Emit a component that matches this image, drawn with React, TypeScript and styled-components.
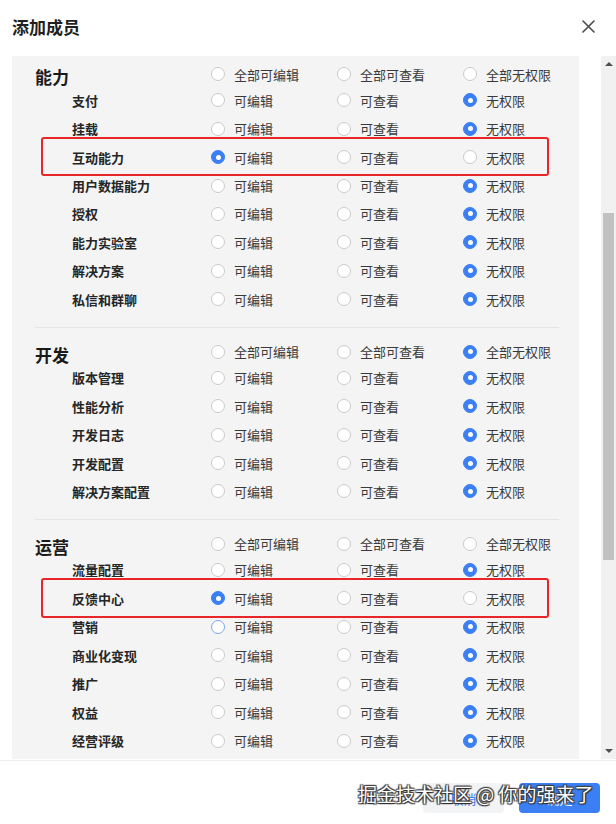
import React from 'react'
import styled, { createGlobalStyle } from 'styled-components'

const GlobalStyle = createGlobalStyle`
  html, body {
    margin: 0;
    padding: 0;
    background: #ffffff;
    overflow: hidden;
  }
  * {
    box-sizing: border-box;
  }
`

const FONT = `"Microsoft YaHei", "Noto Sans CJK SC", "Noto Sans", sans-serif`

const Dialog = styled.div`
  position: relative;
  width: 616px;
  height: 824px;
  background: #ffffff;
  font-family: ${FONT};
  color: #333333;
  overflow: hidden;
`

const Header = styled.div`
  height: 56px;
  display: flex;
  align-items: center;
  justify-content: space-between;
  padding: 0 20px 3px 12px;
`

const Title = styled.h1`
  margin: 0;
  font-size: 17px;
  font-weight: 700;
  color: #1f1f1f;
`

const CloseButton = styled.button`
  width: 16px;
  height: 16px;
  padding: 0;
  border: none;
  background: transparent;
  display: flex;
  align-items: center;
  justify-content: center;
  cursor: pointer;
`

const Body = styled.div`
  height: 704px;
  display: flex;
  padding-left: 12px;
`

const Panel = styled.div`
  width: 573px;
  height: 703px;
  background: #f4f4f4;
  overflow: hidden;
`

const Scrollbar = styled.div`
  margin-left: 22px;
  width: 15px;
  height: 703px;
  background: #f1f1f1;
  display: flex;
  flex-direction: column;
  flex-shrink: 0;
`

const Arrow = styled.div<{ $down?: boolean }>`
  height: 16px;
  display: flex;
  align-items: center;
  justify-content: center;
  &::before {
    content: '';
    border-left: 4px solid transparent;
    border-right: 4px solid transparent;
    ${(p) => (p.$down ? 'border-top: 4px solid #505050;' : 'border-bottom: 4px solid #505050;')}
  }
`

const Track = styled.div`
  flex: 1;
  display: flex;
  flex-direction: column;
  padding-top: 141px;
`

const Thumb = styled.div`
  height: 347px;
  margin: 0 2px;
  background: #c1c1c1;
`

const Section = styled.div`
  margin: 0 20px 0 23px;
  padding: 12px 0 13px;
  border-bottom: 1px solid #e4e4e4;
  &:first-child {
    padding-top: 6px;
  }
  &:last-child {
    border-bottom: none;
  }
`

const Row = styled.div<{ $head?: boolean; $marked?: boolean }>`
  position: relative;
  display: grid;
  grid-template-columns: 176px 126px 126px 126px;
  grid-template-rows: 100%;
  align-items: center;
  height: ${(p) => (p.$head ? '24px' : '28.45px')};
  ${(p) =>
    p.$marked &&
    `
    &::after {
      content: '';
      position: absolute;
      left: 6px;
      right: 10px;
      top: -6px;
      bottom: -5px;
      border: 2px solid #e8262a;
      border-radius: 3px;
      pointer-events: none;
    }
  `}
`

const CategoryTitle = styled.div`
  font-size: 17px;
  line-height: 17px;
  font-weight: 700;
  color: #1a1a1a;
  margin-top: 5px;
`

const ItemLabel = styled.div`
  padding-left: 37px;
  font-size: 13px;
  font-weight: 700;
  color: #262626;
  white-space: nowrap;
`

const Option = styled.label`
  display: flex;
  align-items: center;
  gap: 9px;
  font-size: 13px;
  color: #3a3a3a;
  white-space: nowrap;
  cursor: pointer;
`

const RadioDot = styled.span<{ $checked?: boolean; $hover?: boolean }>`
  position: relative;
  width: 14px;
  height: 14px;
  border-radius: 50%;
  flex-shrink: 0;
  border: 1px solid ${(p) => (p.$checked ? '#3b7ff5' : p.$hover ? '#7aa7ef' : '#cacaca')};
  background: ${(p) => (p.$checked ? '#3b7ff5' : '#ffffff')};
  &::after {
    content: '';
    display: ${(p) => (p.$checked ? 'block' : 'none')};
    position: absolute;
    left: 3.5px;
    top: 3.5px;
    width: 5px;
    height: 5px;
    border-radius: 50%;
    background: #ffffff;
  }
`

const Footer = styled.div`
  height: 64px;
  border-top: 1px solid #ececec;
  display: flex;
  justify-content: flex-end;
  align-items: flex-start;
  gap: 15px;
  padding: 22px 16px 0 0;
`

const Button = styled.button<{ $primary?: boolean }>`
  width: 81px;
  height: 30px;
  border: none;
  border-radius: 4px;
  font-family: ${FONT};
  font-size: 13px;
  background: ${(p) => (p.$primary ? '#3b7ff5' : '#f2f3f5')};
  color: ${(p) => (p.$primary ? '#ffffff' : '#3b7ff5')};
  cursor: pointer;
`

const Watermark = styled.div`
  position: absolute;
  left: 358px;
  top: 781px;
  font-family: ${FONT};
  font-size: 19px;
  line-height: 26px;
  color: #ffffff;
  white-space: nowrap;
  pointer-events: none;
  text-shadow: 0 0 1px #2a2a2a, 1px 1px 1px #2a2a2a, -1px -1px 1px #444, 1px -1px 1px #444, -1px 1px 1px #444;
`

interface Item {
  name: string;
  value: number;
  marked?: boolean;
  hover?: number;
}

interface Group {
  title: string;
  all: number;
  items: Item[];
}

const groups: Group[] = [
  {
    title: '能力',
    all: -1,
    items: [
      { name: '支付', value: 2 },
      { name: '挂载', value: 2 },
      { name: '互动能力', value: 0, marked: true },
      { name: '用户数据能力', value: 2 },
      { name: '授权', value: 2 },
      { name: '能力实验室', value: 2 },
      { name: '解决方案', value: 2 },
      { name: '私信和群聊', value: 2 },
    ],
  },
  {
    title: '开发',
    all: 2,
    items: [
      { name: '版本管理', value: 2 },
      { name: '性能分析', value: 2 },
      { name: '开发日志', value: 2 },
      { name: '开发配置', value: 2 },
      { name: '解决方案配置', value: 2 },
    ],
  },
  {
    title: '运营',
    all: -1,
    items: [
      { name: '流量配置', value: 2 },
      { name: '反馈中心', value: 0, marked: true },
      { name: '营销', value: 2, hover: 0 },
      { name: '商业化变现', value: 2 },
      { name: '推广', value: 2 },
      { name: '权益', value: 2 },
      { name: '经营评级', value: 2 },
    ],
  },
]

const levels = ['可编辑', '可查看', '无权限']

const Radio = ({ label, checked, hover }: { label: string; checked: boolean; hover?: boolean }) => (
  <Option>
    <RadioDot $checked={checked} $hover={hover} />
    {label}
  </Option>
)

const App = () => (
  <Dialog>
    <GlobalStyle />
    <Header>
      <Title>添加成员</Title>
      <CloseButton aria-label="关闭">
        <svg width="13" height="13" viewBox="0 0 13 13">
          <path d="M1 1L12 12M12 1L1 12" stroke="#4a4a4a" strokeWidth="1.6" strokeLinecap="round" />
        </svg>
      </CloseButton>
    </Header>
    <Body>
      <Panel>
        {groups.map((g) => (
          <Section key={g.title}>
            <Row $head>
              <CategoryTitle>{g.title}</CategoryTitle>
              {levels.map((l, i) => (
                <Radio key={l} label={'全部' + l} checked={g.all === i} />
              ))}
            </Row>
            {g.items.map((item) => (
              <Row key={item.name} $marked={item.marked}>
                <ItemLabel>{item.name}</ItemLabel>
                {levels.map((l, i) => (
                  <Radio key={l} label={l} checked={item.value === i} hover={item.hover === i} />
                ))}
              </Row>
            ))}
          </Section>
        ))}
      </Panel>
      <Scrollbar>
        <Arrow />
        <Track>
          <Thumb />
        </Track>
        <Arrow $down />
      </Scrollbar>
    </Body>
    <Footer>
      <Button>取消</Button>
      <Button $primary>确定</Button>
    </Footer>
    <Watermark>掘金技术社区 @ 你的强来了</Watermark>
  </Dialog>
)

export default App
